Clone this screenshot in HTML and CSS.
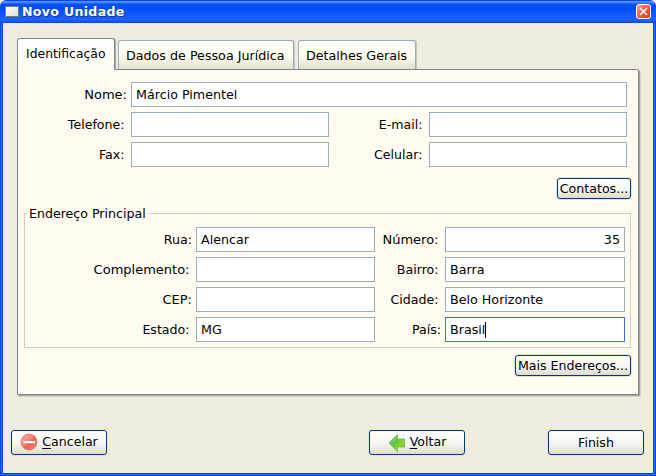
FILE: index.html
```html
<!DOCTYPE html>
<html lang="pt-BR">
<head>
<meta charset="utf-8">
<title>Novo Unidade</title>
<link rel="stylesheet" href="styles.css">
</head>
<body>
<div class="window">
  <header class="titlebar">
    <span class="app-icon"></span>
    <h1>Novo Unidade</h1>
    <span class="close"><svg width="15" height="15" viewBox="0 0 15 15"><path d="M4 4L11 11M11 4L4 11" stroke="#fff" stroke-width="1.6"/></svg></span>
  </header>
  <main>
    <nav class="tabs">
      <span class="tab active">Identificação</span>
      <span class="tab juridica">Dados de Pessoa Jurídica</span>
      <span class="tab gerais">Detalhes Gerais</span>
    </nav>
    <section class="panel">
      <div class="contact">
        <label class="near roomy">Nome:</label><div class="field wide">Márcio Pimentel</div>
        <label>Telefone:</label><div class="field"></div>
        <label>E-mail:</label><div class="field"></div>
        <label>Fax:</label><div class="field"></div>
        <label>Celular:</label><div class="field"></div>
      </div>
      <div class="button contatos">Contatos...</div>
      <div class="group">
        <div class="legend"><span>Endereço Principal</span></div>
        <div class="address">
          <label class="near">Rua:</label><div class="field">Alencar</div>
          <label class="roomy">Número:</label><div class="field number">35</div>
          <label class="roomy">Complemento:</label><div class="field"></div>
          <label>Bairro:</label><div class="field">Barra</div>
          <label class="near roomy">CEP:</label><div class="field"></div>
          <label>Cidade:</label><div class="field">Belo Horizonte</div>
          <label>Estado:</label><div class="field">MG</div>
          <label class="near">País:</label><div class="field focus">Brasil<i class="caret"></i></div>
        </div>
      </div>
      <div class="button mais">Mais Endereços...</div>
    </section>
    <footer>
      <div class="button action cancel">
        <svg width="18" height="18" viewBox="0 0 18 18"><defs><linearGradient id="red" x1="0" y1="0" x2="1" y2="1"><stop offset="0" stop-color="#f9a594"/><stop offset=".45" stop-color="#f8877a"/><stop offset=".55" stop-color="#ee5f50"/><stop offset="1" stop-color="#fa8c78"/></linearGradient></defs><circle cx="9" cy="9" r="8" fill="url(#red)" stroke="#dc7464" stroke-width=".8"/><rect x="3.5" y="8" width="11.5" height="2.2" fill="#fff"/></svg>
        <span><u>C</u>ancelar</span>
      </div>
      <div class="button action back">
        <svg width="18" height="20" viewBox="0 0 18 20"><defs><linearGradient id="green" x1="0" y1="0" x2="1" y2="1"><stop offset="0" stop-color="#91d982"/><stop offset=".45" stop-color="#66c04c"/><stop offset=".7" stop-color="#8edb20"/><stop offset="1" stop-color="#4ca92b"/></linearGradient></defs><path d="M1 10L9.5 1.5V6H16.5V14H9.5V18.5Z" fill="url(#green)" stroke="#72b862" stroke-width=".9"/></svg>
        <span><u>V</u>oltar</span>
      </div>
      <div class="button action finish">Finish</div>
    </footer>
  </main>
</div>
</body>
</html>
```
FILE: styles.css
```css
* { box-sizing: border-box; }
body { margin: 0; background: #fff; color: #000; font: 12.6px/16px "DejaVu Sans", sans-serif; }
.window { width: 656px; height: 476px; background: #efebdf; border-radius: 6px 6px 0 0; overflow: hidden; display: flex; flex-direction: column; }
.titlebar { height: 23px; flex: none; display: flex; align-items: center; padding: 0 5px; background: linear-gradient(#0546e8 0, #0546e8 1px, #5c93ff 1px, #3b7dff 3px, #0850ee 4px, #004df5 8px, #1259ff 15px, #1f62ff 20px, #0747df 23px); }
.app-icon { width: 14px; height: 11px; margin: -1px 3px 0 0; border: 1px solid #777c80; background: linear-gradient(135deg, #fff, #dedede); }
h1 { margin: 0; flex: 1; font-size: 12.6px; line-height: 16px; letter-spacing: .3px; color: #fff; text-shadow: 1px 1px 0 #123a9b; }
.close { width: 15px; height: 15px; border: 1px solid #fff; border-radius: 3px; background: linear-gradient(135deg, #f7a58f, #f4603c 45%, #e8370e); }
.close svg { display: block; margin: -1px; }
main { flex: 1; border: solid #0745df; border-width: 0 3px 3px; padding: 15px 14px 0; position: relative; }
main::before { content: ""; position: absolute; inset: 0 -2px -2px; border: 1px solid #2a6cff; border-top: 0; pointer-events: none; }
.tabs { display: flex; align-items: flex-end; height: 31px; gap: 3px; }
.tab { height: 29px; border: 1px solid #9aacba; border-bottom: 0; border-radius: 3px 3px 0 0; background: linear-gradient(#fffffa, #fffff1 50%, #e4dfcc); padding: 7px 0 0 7px; box-shadow: 1px 0 #c9c6b9; white-space: nowrap; font-size: 12.7px; }
.active { width: 98px; height: 32px; margin-bottom: -1px; padding: 7px 0 0 8px; border-color: #7b898d; background: linear-gradient(#fff, #fffbf0); box-shadow: 1px 0 #aaaaa0; position: relative; z-index: 1; font-size: 12.4px; }
.juridica { width: 176px; margin-right: 1px; }
.gerais { width: 118px; }
.panel { width: 622px; height: 326px; border: 1px solid #76878b; border-radius: 0 2px 0 0; background: #fffbf0; box-shadow: 1px 1px #aba99f, 2px 2px #d8d4c8; display: flex; flex-direction: column; padding: 12px 7px 0 6px; }
.contact, .address { display: grid; row-gap: 5px; }
.contact { grid-template-columns: 107px 198px 100px 198px; }
.address { grid-template-columns: 171px 179px 70px 180px; }
label { text-align: right; padding: 5px 6.5px 0 0; height: 25px; white-space: nowrap; }
.near { padding-right: 4px; }
.roomy { font-size: 13px; }
.field { height: 25px; border: 1px solid #9bacbb; background: #fff; padding: 4px; white-space: nowrap; font-size: 12.7px; }
.wide { grid-column: 2 / 5; }
.number { text-align: right; }
.focus { border-color: #4669eb; }
.caret { display: inline-block; width: 1px; height: 16px; background: #000; vertical-align: top; }
.button { border: 1px solid #003c74; border-radius: 3px; background: linear-gradient(#fff, #f7f6f0 55%, #dedbcd); text-align: center; line-height: 19px; white-space: nowrap; box-shadow: 0 0 0 1px #e5e2d7; }
.contatos, .mais { height: 21px; flex: none; align-self: flex-end; }
.contatos { width: 74px; margin-top: 11px; }
.mais { width: 116px; margin-top: 7px; }
.group { height: 135px; flex: none; margin-top: 14px; border: 1px solid #d0cfc2; }
.legend { height: 13px; padding-left: 2px; }
.legend span { display: inline-block; padding: 0 2px; margin-top: -8px; background: #fffbf0; vertical-align: top; }
footer { display: flex; margin: 35px -6px 0; }
.action { width: 96px; height: 25px; display: flex; justify-content: center; align-items: center; gap: 4px; }
.action span { margin-top: -3px; }
.cancel svg { margin-top: -1px; }
.back { margin-left: 262px; }
.finish { margin-left: 83px; }
u { text-decoration: underline; text-underline-offset: 2px; text-decoration-thickness: 1px; }
```
